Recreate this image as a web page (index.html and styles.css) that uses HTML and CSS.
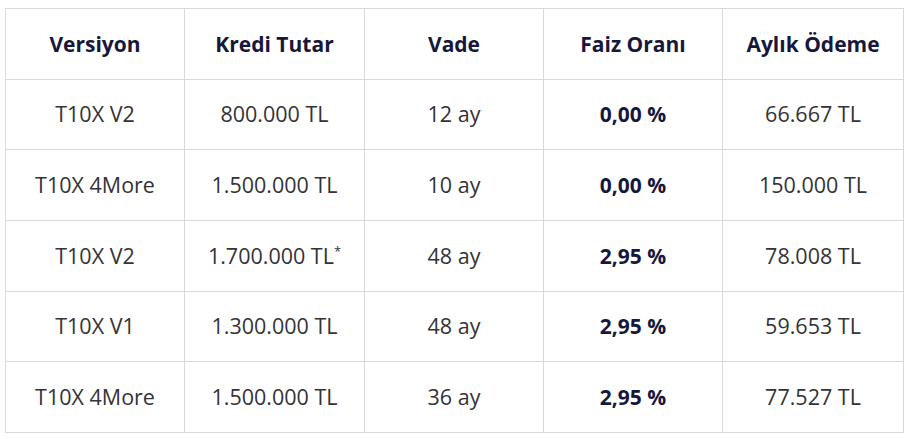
FILE: index.html
```html
<!DOCTYPE html>
<html lang="tr">
<head>
<meta charset="utf-8">
<title>Kredi Tablosu</title>
<link rel="stylesheet" href="styles.css">
</head>
<body>
<table class="loan-table">
  <colgroup>
    <col class="c1"><col class="c2"><col class="c3"><col class="c4"><col class="c5">
  </colgroup>
  <thead>
    <tr>
      <th>Versiyon</th>
      <th>Kredi Tutar</th>
      <th>Vade</th>
      <th>Faiz Oranı</th>
      <th>Aylık Ödeme</th>
    </tr>
  </thead>
  <tbody>
    <tr><td>T10X V2</td><td>800.000 TL</td><td>12 ay</td><td class="rate">0,00 %</td><td>66.667 TL</td></tr>
    <tr><td>T10X 4More</td><td>1.500.000 TL</td><td>10 ay</td><td class="rate">0,00 %</td><td>150.000 TL</td></tr>
    <tr><td>T10X V2</td><td>1.700.000 TL<sup class="star">*</sup></td><td>48 ay</td><td class="rate">2,95 %</td><td>78.008 TL</td></tr>
    <tr><td>T10X V1</td><td>1.300.000 TL</td><td>48 ay</td><td class="rate">2,95 %</td><td>59.653 TL</td></tr>
    <tr><td>T10X 4More</td><td>1.500.000 TL</td><td>36 ay</td><td class="rate">2,95 %</td><td>77.527 TL</td></tr>
  </tbody>
</table>
</body>
</html>
```

FILE: styles.css
```css
html, body {
  margin: 0;
  padding: 0;
  background: #ffffff;
}

body {
  font-family: "Open Sans", "Noto Sans", sans-serif;
  padding: 8px 0 0 5px;
}

.loan-table {
  border-collapse: collapse;
  table-layout: fixed;
  width: 899px;
}

.c1 { width: 179px; }
.c2 { width: 180px; }
.c3 { width: 179px; }
.c4 { width: 179px; }
.c5 { width: 181px; }

.loan-table th,
.loan-table td {
  border: 1px solid #d9d9d9;
  height: 69.67px;
  padding: 0 4px;
  text-align: center;
  vertical-align: middle;
  line-height: 24px;
  white-space: nowrap;
}

.loan-table th {
  font-size: 21px;
  font-weight: 700;
  color: #17173c;
}

.loan-table td {
  font-size: 21.5px;
  font-weight: 400;
  color: #333338;
}

.loan-table td.rate {
  font-size: 21px;
  font-weight: 700;
  color: #17173c;
}

.star {
  font-size: 13px;
  line-height: 0;
  vertical-align: 8px;
}
```
